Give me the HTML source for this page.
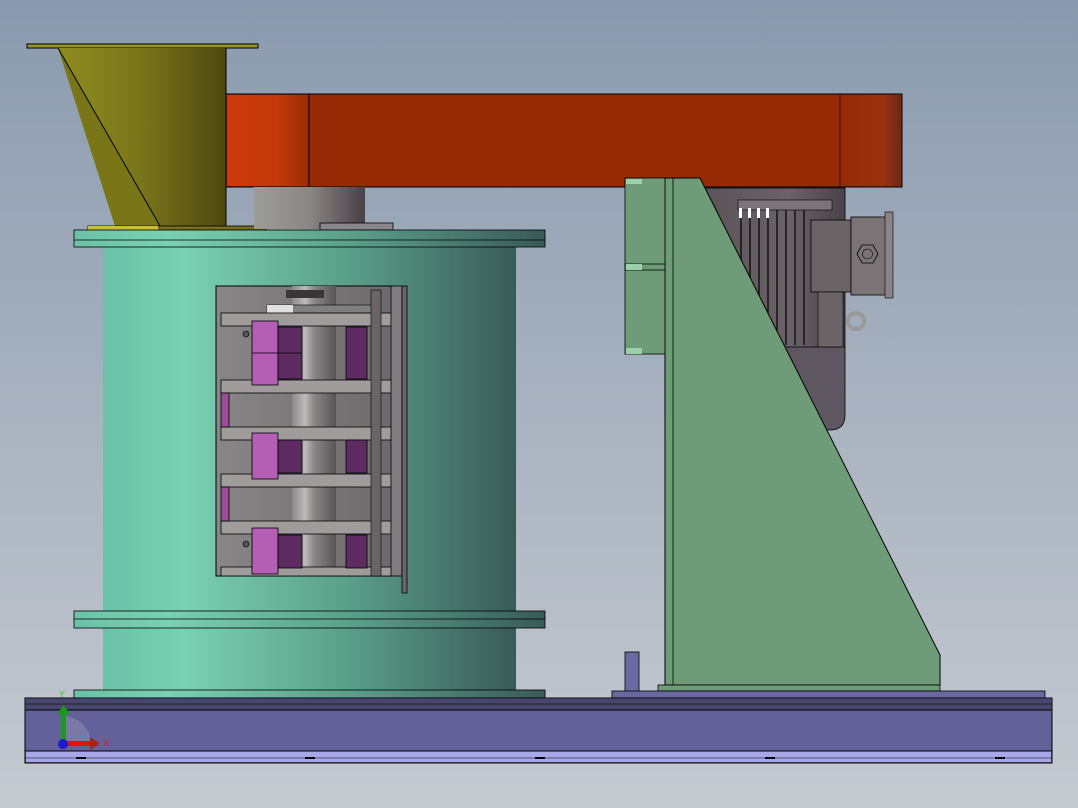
<!DOCTYPE html>
<html><head><style>html,body{margin:0;padding:0;width:1078px;height:808px;overflow:hidden}</style></head>
<body>
<svg width="1078" height="808" viewBox="0 0 1078 808" xmlns="http://www.w3.org/2000/svg">
<defs>
<linearGradient id="bg" x1="0" y1="0" x2="0" y2="1"><stop offset="0" stop-color="#8a9aae"/><stop offset="1" stop-color="#c6cad1"/></linearGradient>
<linearGradient id="olive" x1="0" y1="0" x2="1" y2="0"><stop offset="0" stop-color="#8f8c20"/><stop offset="0.5" stop-color="#7a741a"/><stop offset="1" stop-color="#4e4812"/></linearGradient>
<linearGradient id="orange" x1="0" y1="0" x2="1" y2="0"><stop offset="0" stop-color="#cc3a0a"/><stop offset="0.6" stop-color="#c43a0a"/><stop offset="1" stop-color="#9a2c05"/></linearGradient>
<linearGradient id="oend" x1="0" y1="0" x2="1" y2="0"><stop offset="0" stop-color="#962a05"/><stop offset="0.7" stop-color="#9a3010"/><stop offset="1" stop-color="#6a2a18"/></linearGradient>
<linearGradient id="shaft" x1="0" y1="0" x2="1" y2="0"><stop offset="0" stop-color="#9e9c98"/><stop offset="0.5" stop-color="#8a8684"/><stop offset="1" stop-color="#4a4048"/></linearGradient>
<linearGradient id="teal" x1="0" y1="0" x2="1" y2="0"><stop offset="0" stop-color="#6cc2a6"/><stop offset="0.2" stop-color="#7ad0b2"/><stop offset="0.6" stop-color="#5a9e88"/><stop offset="1" stop-color="#3a5a58"/></linearGradient>
<linearGradient id="win" x1="0" y1="0" x2="1" y2="0"><stop offset="0" stop-color="#888686"/><stop offset="1" stop-color="#6e6a6c"/></linearGradient>
<linearGradient id="roll" x1="0" y1="0" x2="1" y2="0"><stop offset="0" stop-color="#8a8888"/><stop offset="0.3" stop-color="#bcbaba"/><stop offset="0.5" stop-color="#8a8686"/><stop offset="1" stop-color="#5a5458"/></linearGradient>
<linearGradient id="motor" x1="0" y1="0" x2="1" y2="0"><stop offset="0" stop-color="#5a5458"/><stop offset="0.6" stop-color="#6a6268"/><stop offset="1" stop-color="#4a4248"/></linearGradient>
</defs>
<rect width="1078" height="808" fill="url(#bg)"/>

<!-- hopper -->
<rect x="27" y="44" width="231" height="4" fill="#9c9620" stroke="#000" stroke-width="1"/>
<polygon points="58,48 226,48 226,226 115,226" fill="url(#olive)"/>
<polygon points="58,48 160,226 115,226" fill="#7a7618"/>
<line x1="58" y1="48" x2="160" y2="226" stroke="#000" stroke-width="1"/>
<line x1="226" y1="48" x2="226" y2="226" stroke="#000"/>
<rect x="88" y="226" width="178" height="4" fill="#787020" stroke="#000" stroke-width="0.8"/>
<rect x="88" y="226" width="70" height="4" fill="#c8c030"/>

<!-- beam -->
<rect x="226" y="94" width="676" height="93" fill="#952a05" stroke="#000" stroke-width="1"/>
<rect x="227" y="95" width="82" height="91" fill="url(#orange)"/>
<line x1="309" y1="94" x2="309" y2="187" stroke="#000"/>
<rect x="840" y="95" width="61" height="91" fill="url(#oend)"/>
<line x1="840" y1="94" x2="840" y2="187" stroke="#000" stroke-width="0.6"/>

<!-- shaft -->
<rect x="254" y="187" width="111" height="42" fill="url(#shaft)"/>
<rect x="320" y="223" width="73" height="7" fill="#8a868a" stroke="#000" stroke-width="0.8"/>

<!-- cylinder -->
<rect x="103" y="247" width="413" height="444" fill="url(#teal)"/>
<rect x="74" y="230" width="471" height="17" fill="url(#teal)" stroke="#000" stroke-width="0.8"/>
<line x1="74" y1="240" x2="545" y2="240" stroke="#000" stroke-width="0.8"/>
<rect x="74" y="611" width="471" height="17" fill="url(#teal)" stroke="#000" stroke-width="0.8"/>
<line x1="74" y1="619" x2="545" y2="619" stroke="#000" stroke-width="0.8"/>
<rect x="74" y="690" width="471" height="8" fill="url(#teal)" stroke="#000" stroke-width="0.8"/>

<!-- window -->
<rect x="216" y="286" width="176" height="290" fill="url(#win)" stroke="#000" stroke-width="1"/>
<rect x="292" y="286" width="44" height="290" fill="url(#roll)"/>
<rect x="286" y="290" width="38" height="8" fill="#3a3638"/>
<rect x="267" y="305" width="111" height="8" fill="#808080" stroke="#000" stroke-width="0.6"/>
<rect x="267" y="305" width="26" height="8" fill="#e0e0e0"/>
<g fill="#a09c9c" stroke="#000" stroke-width="0.8">
<rect x="221" y="313" width="171" height="13"/>
<rect x="221" y="380" width="171" height="13"/>
<rect x="221" y="427" width="171" height="13"/>
<rect x="221" y="474" width="171" height="13"/>
<rect x="221" y="521" width="171" height="13"/>
<rect x="221" y="567" width="171" height="9"/>
</g>
<g stroke="#000" stroke-width="0.8">
<rect x="252" y="321" width="26" height="64" fill="#b45eb4"/>
<rect x="278" y="327" width="24" height="52" fill="#5e2c62"/>
<rect x="346" y="327" width="21" height="52" fill="#5e2c62"/>
<rect x="252" y="433" width="26" height="46" fill="#b45eb4"/>
<rect x="278" y="440" width="24" height="33" fill="#5e2c62"/>
<rect x="346" y="440" width="21" height="33" fill="#5e2c62"/>
<rect x="252" y="528" width="26" height="46" fill="#b45eb4"/>
<rect x="278" y="535" width="24" height="33" fill="#5e2c62"/>
<rect x="346" y="535" width="21" height="33" fill="#5e2c62"/>
<rect x="221" y="393" width="8" height="34" fill="#9a4e9a"/>
<rect x="221" y="487" width="8" height="34" fill="#9a4e9a"/>
</g>
<line x1="252" y1="353" x2="302" y2="353" stroke="#000" stroke-width="0.8"/>
<rect x="371" y="290" width="10" height="286" fill="#6a6466" stroke="#000" stroke-width="0.6"/>
<rect x="391" y="286" width="11" height="290" fill="#807c80" stroke="#000" stroke-width="0.8"/>
<rect x="402" y="286" width="5" height="307" fill="#6a6668" stroke="#000" stroke-width="0.8"/>
<circle cx="246" cy="334" r="3" fill="#555" stroke="#000" stroke-width="0.6"/>
<circle cx="246" cy="544" r="3" fill="#555" stroke="#000" stroke-width="0.6"/>

<!-- motor -->
<rect x="705" y="188" width="140" height="160" fill="url(#motor)" stroke="#000" stroke-width="0.8"/>
<rect x="738" y="200" width="94" height="10" fill="#7a7478" stroke="#000" stroke-width="0.6"/>
<g stroke="#000" stroke-width="1.2">
<line x1="741" y1="210" x2="741" y2="345"/><line x1="750" y1="210" x2="750" y2="345"/><line x1="759" y1="210" x2="759" y2="345"/><line x1="768" y1="210" x2="768" y2="345"/><line x1="777" y1="210" x2="777" y2="345"/><line x1="786" y1="210" x2="786" y2="345"/><line x1="795" y1="210" x2="795" y2="345"/><line x1="804" y1="210" x2="804" y2="345"/>
</g>
<g fill="#fff"><rect x="739" y="208" width="3" height="10"/><rect x="748" y="208" width="3" height="10"/><rect x="757" y="208" width="3" height="10"/><rect x="766" y="208" width="3" height="10"/></g>
<path d="M785,347 H845 V415 Q845,430 830,430 H800 Z" fill="#5e5660" stroke="#000" stroke-width="0.8"/>
<rect x="811" y="220" width="40" height="72" fill="#6a6466" stroke="#000" stroke-width="0.8"/>
<rect x="851" y="217" width="40" height="78" fill="#7a7476" stroke="#000" stroke-width="0.8"/>
<rect x="885" y="212" width="8" height="86" fill="#8a8486" stroke="#000" stroke-width="0.6"/>
<polygon points="857,254 862,245 873,245 878,254 873,263 862,263" fill="none" stroke="#000" stroke-width="0.8"/>
<circle cx="867.5" cy="254" r="5" fill="none" stroke="#000" stroke-width="0.6"/>
<rect x="818" y="292" width="25" height="55" fill="#6a6466" stroke="#000" stroke-width="0.6"/>
<circle cx="856" cy="321" r="8" fill="none" stroke="#999" stroke-width="4"/>

<!-- bracket -->
<polygon points="665,178 700,178 940,655 940,685 665,685" fill="#6e9c78" stroke="#000" stroke-width="1"/>
<line x1="673" y1="178" x2="673" y2="685" stroke="#000" stroke-width="0.8"/>
<rect x="625" y="178" width="40" height="176" fill="#6e9c78" stroke="#000" stroke-width="0.8"/>
<rect x="625" y="264" width="40" height="6" fill="#6e9c78" stroke="#000" stroke-width="0.8"/>
<g fill="#9cd0a8"><rect x="626" y="179" width="16" height="5"/><rect x="626" y="264" width="16" height="6"/><rect x="626" y="348" width="16" height="6"/></g>
<rect x="658" y="685" width="282" height="6" fill="#6e9c78" stroke="#000" stroke-width="0.8"/>

<!-- base -->
<rect x="625" y="652" width="14" height="40" fill="#6a6aa0" stroke="#000" stroke-width="0.8"/>
<rect x="612" y="691" width="433" height="7" fill="#6a68a0" stroke="#000" stroke-width="0.8"/>
<rect x="25" y="698" width="1027" height="65" fill="#63609a" stroke="#000" stroke-width="1"/>
<rect x="26" y="699" width="1025" height="11" fill="#48466e"/>
<line x1="25" y1="704" x2="1052" y2="704" stroke="#222" stroke-width="1"/>
<line x1="25" y1="710" x2="1052" y2="710" stroke="#000" stroke-width="1"/>
<rect x="26" y="751" width="1025" height="11" fill="#a8a8e8"/>
<line x1="25" y1="751" x2="1052" y2="751" stroke="#000" stroke-width="1"/>
<line x1="25" y1="758" x2="1052" y2="758" stroke="#000" stroke-width="0.6"/>
<g fill="#000"><rect x="76" y="757" width="10" height="2"/><rect x="305" y="757" width="10" height="2"/><rect x="535" y="757" width="10" height="2"/><rect x="765" y="757" width="10" height="2"/><rect x="995" y="757" width="10" height="2"/></g>

<!-- triad -->
<path d="M63,716 A28,28 0 0 1 91,744 L63,744 Z" fill="#8a88b0" opacity="0.6"/>
<rect x="61" y="712" width="5" height="32" fill="#1a9a1a"/>
<polygon points="57,714 70,714 63.5,705" fill="#1a9a1a"/>
<rect x="63" y="741" width="28" height="5" fill="#d01818"/>
<polygon points="90,737 90,750 100,743.5" fill="#c01818"/>
<circle cx="63" cy="744" r="5" fill="#1a1ad0"/>
<text x="59" y="697" font-family="Liberation Sans, sans-serif" font-size="9" fill="#2ad02a">Y</text>
<text x="103" y="746" font-family="Liberation Sans, sans-serif" font-size="9" fill="#e01818">X</text>
</svg>
</body></html>
